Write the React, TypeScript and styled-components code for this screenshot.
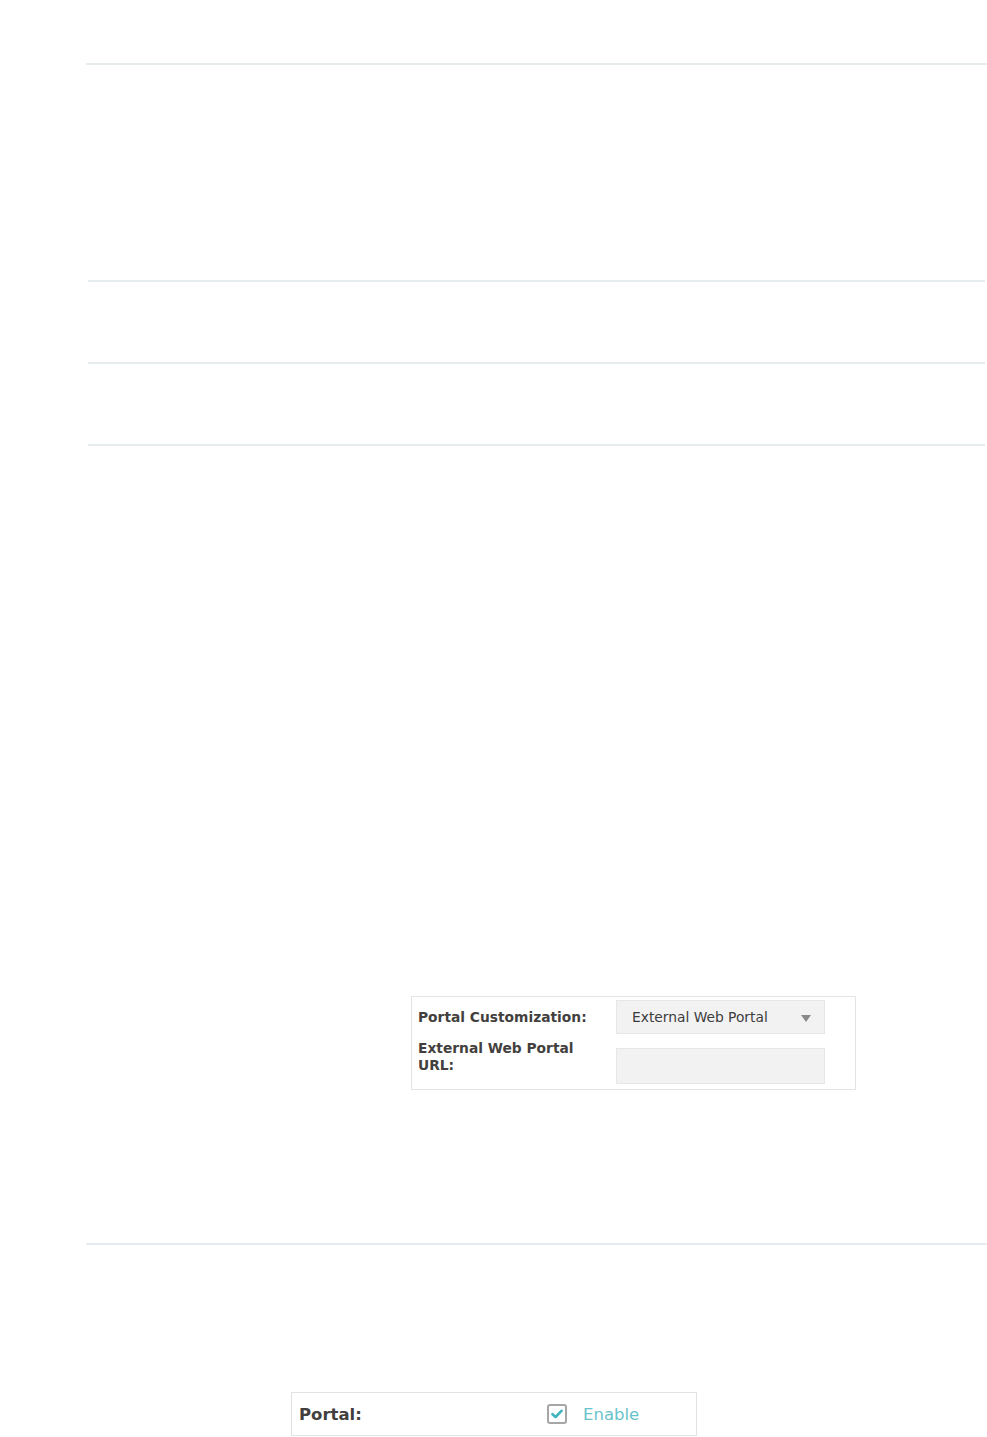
import React from "react";
import styled, { createGlobalStyle } from "styled-components";

const GlobalStyle = createGlobalStyle`
    body {
        margin: 0;
        background: #fff;
        font-family: "DejaVu Sans", Verdana, sans-serif;
    }
`;

const Page = styled.div`
    width: 987px;
    min-height: 1437px;
    padding-top: 63px;
    box-sizing: border-box;
    overflow: hidden;
`;

const Rule = styled.div<{ $inset: number; $end: number }>`
    height: 2px;
    background: #e7ecef;
    margin-left: ${(p) => p.$inset}px;
    margin-right: ${(p) => p.$end}px;
`;

const Blank = styled.div<{ $h: number }>`
    height: ${(p) => p.$h}px;
`;

const FigureArea = styled.div<{ $top: number; $bottom: number; $left: number }>`
    padding-top: ${(p) => p.$top}px;
    padding-bottom: ${(p) => p.$bottom}px;
    padding-left: ${(p) => p.$left}px;
`;

const FormBox = styled.div`
    width: 445px;
    box-sizing: border-box;
    border: 1px solid #e4e4e4;
    padding: 3px 30px 5px 6px;
    display: grid;
    grid-template-columns: 198px 209px;
    row-gap: 6px;
    align-items: center;
`;

const Label = styled.div<{ $top?: boolean }>`
    font-size: 13.8px;
    font-weight: bold;
    line-height: 17px;
    color: #433f3e;
    max-width: 180px;
    align-self: ${(p) => (p.$top ? "start" : "center")};
`;

const Select = styled.div`
    height: 34px;
    box-sizing: border-box;
    border: 1px solid #e6e6e6;
    background: #f2f2f2;
    display: flex;
    align-items: center;
    justify-content: space-between;
    padding: 0 13px 0 15px;
    font-size: 13.8px;
    color: #3c3c3c;
`;

const Caret = styled.span`
    width: 0;
    height: 0;
    border-left: 5px solid transparent;
    border-right: 5px solid transparent;
    border-top: 7px solid #8a8a8a;
    margin-top: 2px;
`;

const Input = styled.div`
    height: 36px;
    margin-top: 8px;
    box-sizing: border-box;
    border: 1px solid #e6e6e6;
    background: #f2f2f2;
`;

const PortalBox = styled.div`
    width: 406px;
    height: 44px;
    box-sizing: border-box;
    border: 1px solid #e2e2e2;
    display: flex;
    align-items: center;
    padding-left: 7px;
`;

const PortalLabel = styled.div`
    width: 248px;
    font-size: 16.5px;
    font-weight: bold;
    color: #433f3e;
`;

const Check = styled.span`
    width: 20px;
    height: 20px;
    box-sizing: border-box;
    border: 2px solid #a6a6a6;
    border-radius: 3px;
    display: flex;
    align-items: center;
    justify-content: center;
    background: #fff;
`;

const EnableText = styled.span`
    margin-left: 16px;
    font-size: 16.5px;
    color: #68c3ca;
`;

export default function App() {
    return (
        <>
            <GlobalStyle />
            <Page>
                <Rule $inset={86} $end={0} />
                <Blank $h={215} />
                <Rule $inset={88} $end={2} />
                <Blank $h={80} />
                <Rule $inset={88} $end={2} />
                <Blank $h={80} />
                <Rule $inset={88} $end={2} />
                <FigureArea $top={550} $bottom={153} $left={411}>
                    <FormBox>
                        <Label>Portal Customization:</Label>
                        <Select>
                            External Web Portal
                            <Caret />
                        </Select>
                        <Label $top>External Web Portal URL:</Label>
                        <Input />
                    </FormBox>
                </FigureArea>
                <Rule $inset={86} $end={0} />
                <FigureArea $top={147} $bottom={0} $left={291}>
                    <PortalBox>
                        <PortalLabel>Portal:</PortalLabel>
                        <Check>
                            <svg width="12" height="10" viewBox="0 0 12 10">
                                <path d="M1.5 5.2 L4.6 8 L10.5 1.8" fill="none" stroke="#3fb5bd" strokeWidth="2.6" strokeLinecap="round" strokeLinejoin="round" />
                            </svg>
                        </Check>
                        <EnableText>Enable</EnableText>
                    </PortalBox>
                </FigureArea>
            </Page>
        </>
    );
}
